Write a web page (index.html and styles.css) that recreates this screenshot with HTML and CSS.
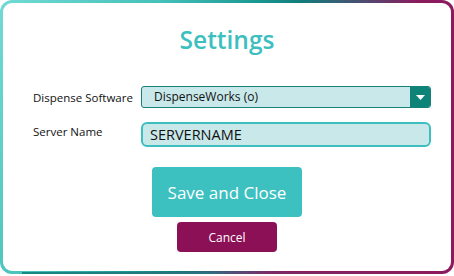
FILE: index.html
```html
<!DOCTYPE html>
<html><head>
<title>Settings</title>
<link rel="stylesheet" href="styles.css">
</head><body>

<div class="frame">
  <div class="title">Settings</div>

  <div class="form">
    <label class="label">Dispense Software</label>
    <div class="select">
      <span class="select-value">DispenseWorks (o)</span>
      <span class="select-arrow"><svg width="9" height="5" viewBox="0 0 9 5"><path d="M0 0H9L4.5 5Z" fill="#fff"/></svg></span>
    </div>

    <label class="label label-top">Server Name</label>
    <div class="textbox">SERVERNAME</div>
  </div>

  <div class="actions">
    <button class="btn btn-save">Save and Close</button>
    <button class="btn btn-cancel">Cancel</button>
  </div>
</div>

</body></html>
```

FILE: styles.css
```css
html, body {
  margin: 0;
  padding: 0;
  background: #fff;
  }
body {
  font-family: "Open Sans", "Noto Sans", sans-serif;
  color: #111;
  }
.frame {
  position: relative;
  box-sizing: border-box;
  width: 454px;
  height: 274px;
  border: 3px solid transparent;
  border-radius: 12px;
  background:
    linear-gradient(#fff, #fff) padding-box,
    linear-gradient(115deg, #72dad4 0%, #45c0b9 28%, #1c9892 44%, #127c7a 52%, #4a4f72 62%, #8c1a5e 72%, #8c1a5e 100%) border-box;
  }
.frame::after {
  content: "";
  position: absolute;
  left: 19px;
  right: 16px;
  bottom: -4px;
  height: 3px;
  background: linear-gradient(to right, #138a84 0%, #2a6f80 45%, #5a4a7a 52%, #7a2a66 60%, #8c1a5e 100%);
  }
.title {
  margin-top: 20px;
  text-align: center;
  font-size: 24.5px;
  font-weight: 600;
  line-height: 34px;
  color: #3dbfbf;
  }
.form {
  display: grid;
  grid-template-columns: 108px 1fr;
  row-gap: 14px;
  margin: 29px 20px 0 30px;
  }
.label {
  font-size: 11.5px;
  align-self: center;
  }
.label-top {
  align-self: start;
  padding-top: 2px;
  }
.select {
  display: flex;
  height: 22px;
  box-sizing: border-box;
  border: 1px solid #17807a;
  border-radius: 3px;
  background: #c8e8ea;
  overflow: hidden;
  }
.select-value {
  flex: 1;
  padding-left: 12px;
  font-size: 12px;
  line-height: 20px;
  }
.select-arrow {
  display: flex;
  align-items: center;
  justify-content: center;
  width: 20px;
  background: #0e8478;
  }
.textbox {
  height: 25px;
  box-sizing: border-box;
  border: 2px solid #3dbfbf;
  border-radius: 6px;
  background: #c8e8ea;
  padding-left: 7px;
  font-size: 14.5px;
  line-height: 21px;
  }
.actions {
  display: flex;
  flex-direction: column;
  align-items: center;
  gap: 5px;
  margin-top: 20px;
  }
.btn {
  border: none;
  border-radius: 4px;
  color: #fff;
  font-family: inherit;
  padding: 0;
  }
.btn-save {
  width: 150px;
  height: 50px;
  background: #3cc0c0;
  font-size: 17px;
  }
.btn-cancel {
  width: 100px;
  height: 30px;
  background: #8c1056;
  font-size: 12px;
  }
```
